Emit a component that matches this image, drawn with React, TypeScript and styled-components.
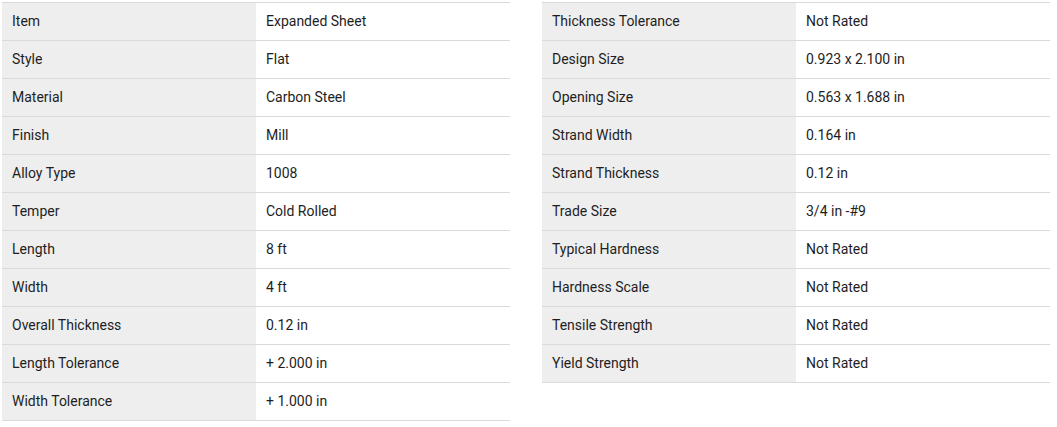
import React from 'react';
import styled, { createGlobalStyle } from 'styled-components';

const specsLeft: [string, string][] = [
  ['Item', 'Expanded Sheet'],
  ['Style', 'Flat'],
  ['Material', 'Carbon Steel'],
  ['Finish', 'Mill'],
  ['Alloy Type', '1008'],
  ['Temper', 'Cold Rolled'],
  ['Length', '8 ft'],
  ['Width', '4 ft'],
  ['Overall Thickness', '0.12 in'],
  ['Length Tolerance', '+ 2.000 in'],
  ['Width Tolerance', '+ 1.000 in'],
];

const specsRight: [string, string][] = [
  ['Thickness Tolerance', 'Not Rated'],
  ['Design Size', '0.923 x 2.100 in'],
  ['Opening Size', '0.563 x 1.688 in'],
  ['Strand Width', '0.164 in'],
  ['Strand Thickness', '0.12 in'],
  ['Trade Size', '3/4 in -#9'],
  ['Typical Hardness', 'Not Rated'],
  ['Hardness Scale', 'Not Rated'],
  ['Tensile Strength', 'Not Rated'],
  ['Yield Strength', 'Not Rated'],
];

const SpecTable = ({ rows }: { rows: [string, string][] }) => (
  <Table>
    <tbody>
      {rows.map(([label, value]) => (
        <Row key={label}>
          <Label>{label}</Label>
          <Value>{value}</Value>
        </Row>
      ))}
    </tbody>
  </Table>
);

const App = () => {
  return (
    <>
      <GlobalStyle />
      <Container>
        <SpecTable rows={specsLeft} />
        <SpecTable rows={specsRight} />
      </Container>
    </>
  );
};
export default App;

const GlobalStyle = createGlobalStyle`
  body {
    margin: 0;
    background: #fff;
    font-family: Roboto, "Liberation Sans", sans-serif;
  }
`;
const Container = styled.div`
  display: flex;
  align-items: flex-start;
  gap: 32px;
  padding: 2px;
`;
const Table = styled.table`
  width: 508px;
  border-collapse: collapse;
  table-layout: fixed;
  border-top: 1px solid #dadada;
`;
const Row = styled.tr`
  border-bottom: 1px solid #dadada;
`;
const Cell = styled.td`
  height: 36px;
  padding: 0 10px 1px;
  font-size: 14px;
  color: #1e1e1e;
  vertical-align: middle;
  box-sizing: content-box;
`;
const Label = styled(Cell)`
  width: 234px;
  background-color: #eeeeee;
`;
const Value = styled(Cell)`
  background-color: #fff;
`;
